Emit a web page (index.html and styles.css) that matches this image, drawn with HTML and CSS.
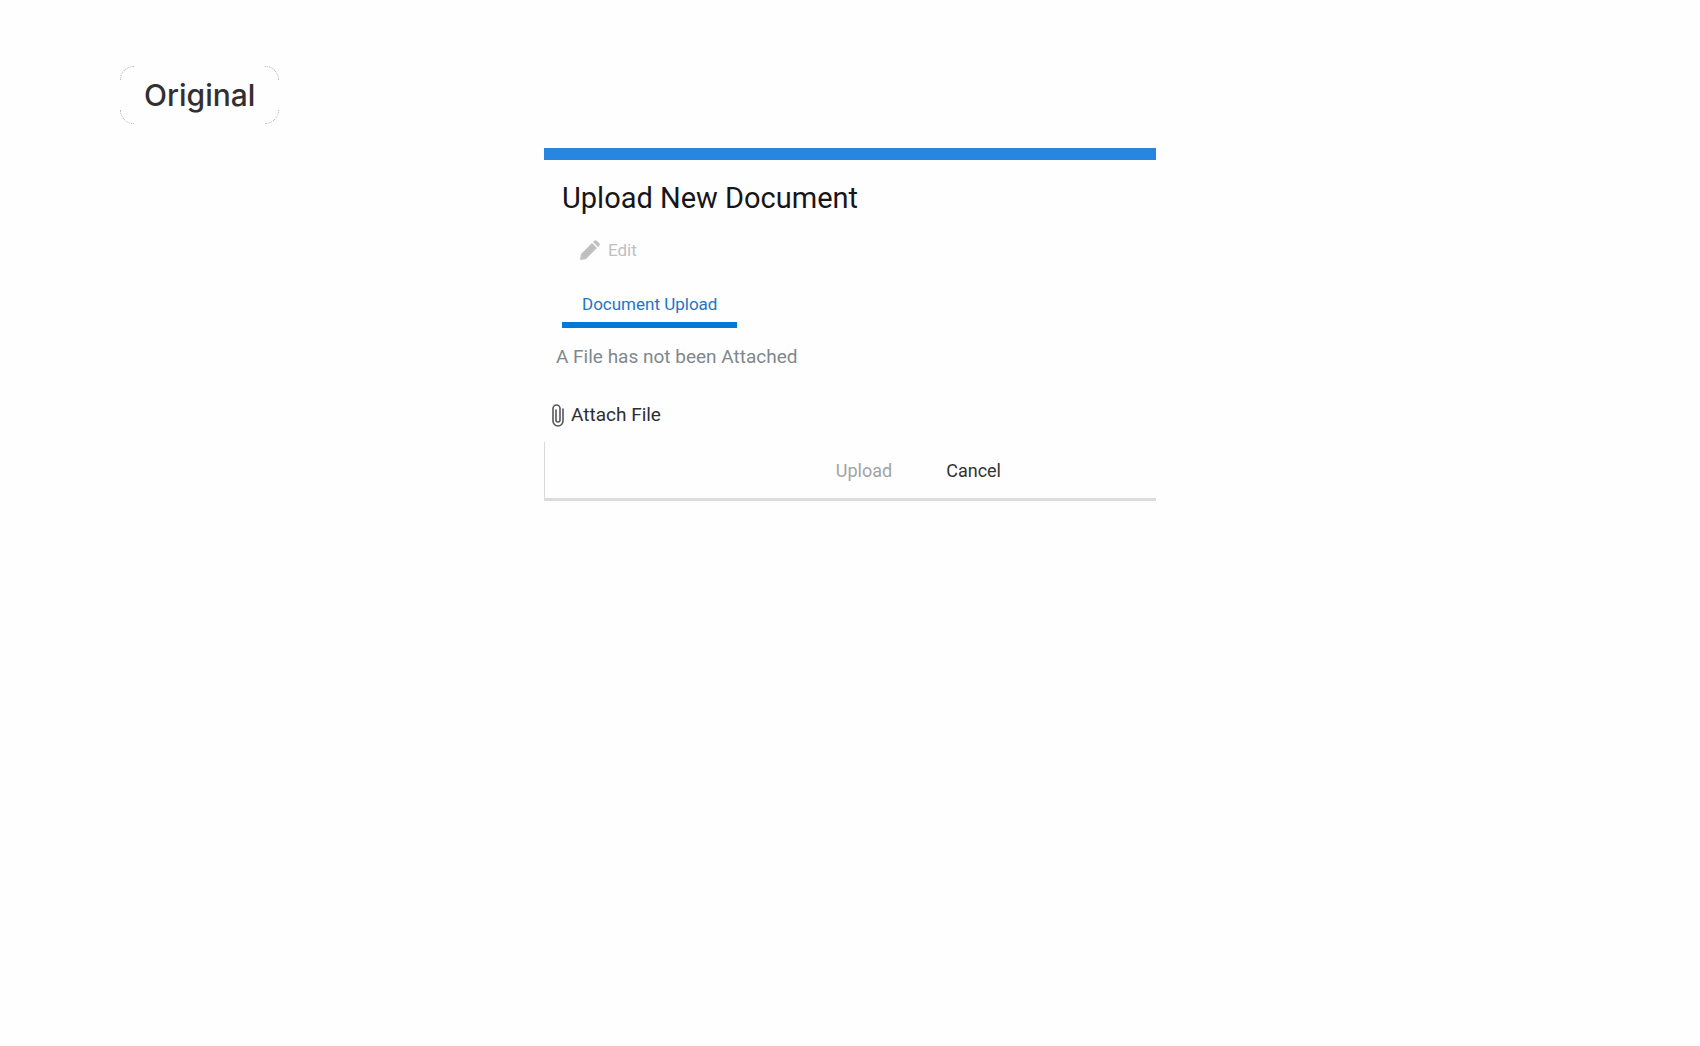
FILE: index.html
```html
<!DOCTYPE html>
<html lang="en">
<head>
<meta charset="utf-8">
<title>Upload New Document</title>
<link rel="stylesheet" href="styles.css">
</head>
<body>
<header class="page-header">
  <div class="badge">
    <i class="corner top-left"></i><i class="corner top-right"></i>
    <span>Original</span>
    <i class="corner bottom-left"></i><i class="corner bottom-right"></i>
  </div>
</header>
<main class="dialog">
  <h1 class="title">Upload New Document</h1>
  <div class="toolbar">
    <button class="edit" type="button" disabled>
      <svg class="pencil" viewBox="0 0 20 20" aria-hidden="true">
        <path d="M0 20l1-6L12 3l5 5L6 19zM13 2l1.300-1.300q1.200-1 2.400 0l2.600 2.600q1 1.200 0 2.400L18 7z" fill="#c0c0c5"/>
        <path d="M4 14l9-9M5 16l10-10" stroke="#aeaeb6" stroke-width="1" stroke-dasharray="1 2"/>
      </svg>
      Edit
    </button>
  </div>
  <nav class="tabs"><a class="tab" href="#document-upload">Document Upload</a></nav>
  <section id="document-upload" class="panel">
    <p class="status">A File has not been Attached</p>
    <button class="attach" type="button">
      <svg class="clip" viewBox="0 0 12 23" aria-hidden="true">
        <path d="M11 5v12a5 5 0 0 1-10 0V4.500a3.500 3.500 0 0 1 7 0V16a2 2 0 0 1-4 0V6" fill="none" stroke="#55565c" stroke-width="1.600" stroke-linecap="round"/>
      </svg>
      Attach File
    </button>
  </section>
  <footer class="actions">
    <button class="upload" type="button" disabled>Upload</button>
    <button class="cancel" type="button">Cancel</button>
  </footer>
</main>
</body>
</html>
```
FILE: styles.css
```css
* { box-sizing: border-box; }
body {
  margin: 0;
  background: #fefefe;
  font-family: Roboto, "Liberation Sans", sans-serif;
}
button {
  display: flex;
  align-items: center;
  padding: 0;
  border: 0;
  background: none;
  font: inherit;
}
.page-header {
  display: flex;
  padding: 66px 120px 24px;
}
.badge {
  position: relative;
  padding: 9px 24px;
  color: #332f31;
  font: 500 30px/40px Inter, sans-serif;
}
.corner {
  position: absolute;
  width: 14px;
  height: 14px;
  border: 0 dotted #b5b5b5;
}
.top-left { top: 0; left: 0; border-width: 1px 0 0 1px; border-top-left-radius: 14px; }
.top-right { top: 0; right: 0; border-width: 1px 1px 0 0; border-top-right-radius: 14px; }
.bottom-left { bottom: 0; left: 0; border-width: 0 0 1px 1px; border-bottom-left-radius: 14px; }
.bottom-right { bottom: 0; right: 0; border-width: 0 1px 1px 0; border-bottom-right-radius: 14px; }
.dialog {
  width: 36%;
  margin: 0 auto;
  border-top: 12px solid #2986de;
}
.title {
  margin: 0;
  padding: 18px 18px 0;
  color: #16161a;
  font-size: 29px;
  font-weight: 400;
  line-height: 40px;
}
.toolbar { padding: 20px 36px 0; }
.edit {
  gap: 8px;
  color: #bfc0c1;
  font-size: 17px;
  line-height: 24px;
}
.pencil { width: 20px; height: 20px; }
.tabs { display: flex; padding: 30px 18px 0; }
.tab {
  padding: 0 20px 6px;
  border-bottom: 6px solid #0078d7;
  color: #1f74c8;
  font-size: 17px;
  line-height: 24px;
  text-decoration: none;
}
.panel { padding: 17px 8px 15px; }
.status {
  margin: 0;
  padding: 0 4px;
  color: #7f888c;
  font-size: 19px;
  line-height: 24px;
}
.attach {
  gap: 7px;
  margin-top: 34px;
  color: #2c2e33;
  font-size: 19px;
  line-height: 24px;
}
.clip { width: 12px; height: 23px; }
.actions {
  display: flex;
  justify-content: flex-end;
  gap: 54px;
  padding: 17px 155px 15px 0;
  border-left: 1px solid #d6dadb;
  border-bottom: 3px solid #d9dddf;
  font-size: 18px;
  line-height: 24px;
}
.upload { color: #a1a4a5; }
.cancel { color: #333; }
```
